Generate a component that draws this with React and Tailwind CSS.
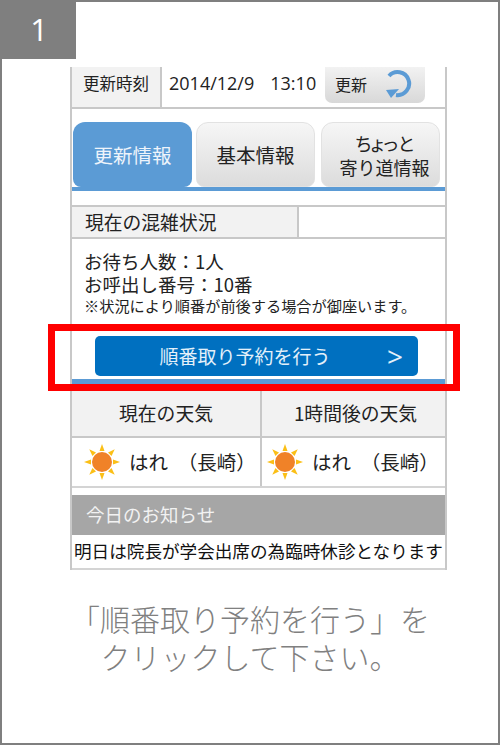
const jp = { fontFamily: '"Noto Sans CJK JP", sans-serif' };

function Sun() {
  const rays = [0, 45, 90, 135, 180, 225, 270, 315];
  return (
    <svg width="36" height="36" viewBox="0 0 36 36" className="shrink-0">
      {rays.map((r) => (
        <polygon key={r} points="18,0 20.5,7 15.5,7" fill="#fbbf16" transform={`rotate(${r} 18 18)`} />
      ))}
      <circle cx="18" cy="18" r="10" fill="#f08228" />
    </svg>
  );
}

function Refresh() {
  return (
    <svg width="30" height="30" viewBox="0 0 30 30" className="shrink-0">
      <path d="M5 7 A11.5 11.5 0 1 1 12 26" fill="none" stroke="#5b9bd5" strokeWidth="4" />
      <polygon points="2,21 15,20 7,29" fill="#5b9bd5" />
    </svg>
  );
}

function Tab({ active, className = "text-[19.5px]", children }) {
  return (
    <div
      className={`w-[119px] h-[65px] rounded-t-[12px] rounded-b-[8px] flex items-center justify-center text-center leading-[24px] ${className} ${
        active
          ? "bg-[#5b9bd5] text-[#eef4fb]"
          : "border border-[#e2e2e2] bg-gradient-to-b from-[#f6f6f6] to-[#dcdcdc] text-[#222]"
      }`}
    >
      {children}
    </div>
  );
}

function WeatherCell({ className = "" }) {
  return (
    <div className={`flex-1 min-w-0 flex items-center gap-[9px] text-[19.5px] text-[#222] ${className}`}>
      <Sun />
      <span className="whitespace-pre">はれ　（長崎）</span>
    </div>
  );
}

export default function App() {
  return (
    <div style={jp} className="relative w-[500px] h-[745px] border-2 border-[#7f7f7f] bg-white overflow-hidden flex flex-col">
      <div className="absolute left-[-2px] top-[-2px] w-[76px] h-[59px] pl-[2px] bg-[#7f7f7f] text-white text-[31px] flex items-center justify-center" style={{ fontFamily: '"Open Sans", sans-serif' }}>
        1
      </div>

      <div className="relative w-[377px] mt-[65px] ml-[68px] border-x-2 border-[#c8c8c8] flex flex-col">
        {/* 更新時刻 */}
        <div className="h-[42px] flex items-center border-b-2 border-[#c8c8c8]">
          <div className="w-[90px] h-full pb-[8px] bg-[#f2f2f2] border-r-2 border-[#c8c8c8] flex items-center justify-center text-[16.5px] text-[#222]">
            更新時刻
          </div>
          <div className="w-[163px] pl-[7px] pb-[8px] text-[18px] text-[#222] whitespace-pre" style={{ fontFamily: '"Open Sans", sans-serif' }}>
            2014/12/9   <span className="ml-[2px]">13:10</span>
          </div>
          <div className="w-[100px] h-[36px] self-start rounded-b-[7px] bg-gradient-to-b from-[#f2f2f2] to-[#d8d8d8] flex items-center pl-[10px] pb-[3px] gap-[17px] text-[16px] text-[#222]">
            更新
            <Refresh />
          </div>
        </div>

        {/* tabs */}
        <div className="flex mt-[13px] pl-[1px] gap-[4px]">
          <Tab active>更新情報</Tab>
          <Tab>基本情報</Tab>
          <div className="ml-[2px]">
            <Tab className="text-[18px] pl-[8px]">
              <span>
                <span className="[font-feature-settings:'palt']">ちょっと</span>
                <br />
                寄り道情報
              </span>
            </Tab>
          </div>
        </div>
        <div className="h-[4px] bg-[#5b9bd5]" />

        {/* 混雑状況 */}
        <div className="mt-[14px] h-[34px] flex border-y-2 border-[#c8c8c8]">
          <div className="w-[227px] bg-[#f2f2f2] border-r-2 border-[#c8c8c8] pl-[13px] flex items-center text-[18.8px] text-[#222]">
            現在の混雑状況
          </div>
        </div>
        <div className="h-[97px] pl-[12px] pt-[11px] text-[#222]">
          <p className="text-[18.5px] leading-[23px]">お待ち人数：1人</p>
          <p className="text-[18.5px] leading-[23px]">お呼出し番号：10番</p>
          <p className="text-[15.2px] leading-[18px] whitespace-nowrap">※状況により順番が前後する場合が御座います。</p>
        </div>

        {/* 順番取り */}
        <div className="h-[40px] ml-[23px] w-[323px] rounded-[5px] bg-[#0070c0] text-[#e4f0fa] relative flex items-center justify-center pr-[23px] text-[19px]">
          順番取り予約を行う
          <span className="absolute right-[15px] text-[28px] leading-none" style={{ fontFamily: '"Open Sans", sans-serif' }}>&gt;</span>
        </div>
        <div className="mt-[3px] h-[5px] bg-[#5b9bd5]" />

        {/* 天気 */}
        <div className="mt-[7px] h-[47px] flex bg-[#f2f2f2] border-b-2 border-[#c8c8c8] text-[18.8px] text-[#222]">
          <div className="w-[190px] border-r-2 border-[#c8c8c8] flex items-center justify-center">現在の天気</div>
          <div className="flex-1 flex items-center justify-center pl-[4px]">1時間後の天気</div>
        </div>
        <div className="h-[50px] flex border-b-2 border-[#d4d4d4]">
          <WeatherCell className="max-w-[190px] pl-[12px] border-r-2 border-[#c8c8c8]" />
          <WeatherCell className="pl-[5px]" />
        </div>

        {/* お知らせ */}
        <div className="mt-[7px] h-[40px] bg-[#a6a6a6] text-[#f2f2f2] flex items-center pl-[14px] text-[18.5px]">
          今日のお知らせ
        </div>
        <div className="h-[35px] border-b-2 border-[#d4d4d4] flex items-center justify-center text-[17.6px] text-[#111] whitespace-nowrap">
          明日は院長が学会出席の為臨時休診となります
        </div>

        {/* 赤枠 */}
        <div className="absolute left-[-24px] top-[257px] w-[412px] h-[67px] border-[7px] border-[#ff0000]" />
      </div>

      <div className="mt-[29px] text-center text-[30px] leading-[38px] font-light text-[#808080]">
        「順番取り予約を行う」を
        <br />
        クリックして下さい。
      </div>
    </div>
  );
}
